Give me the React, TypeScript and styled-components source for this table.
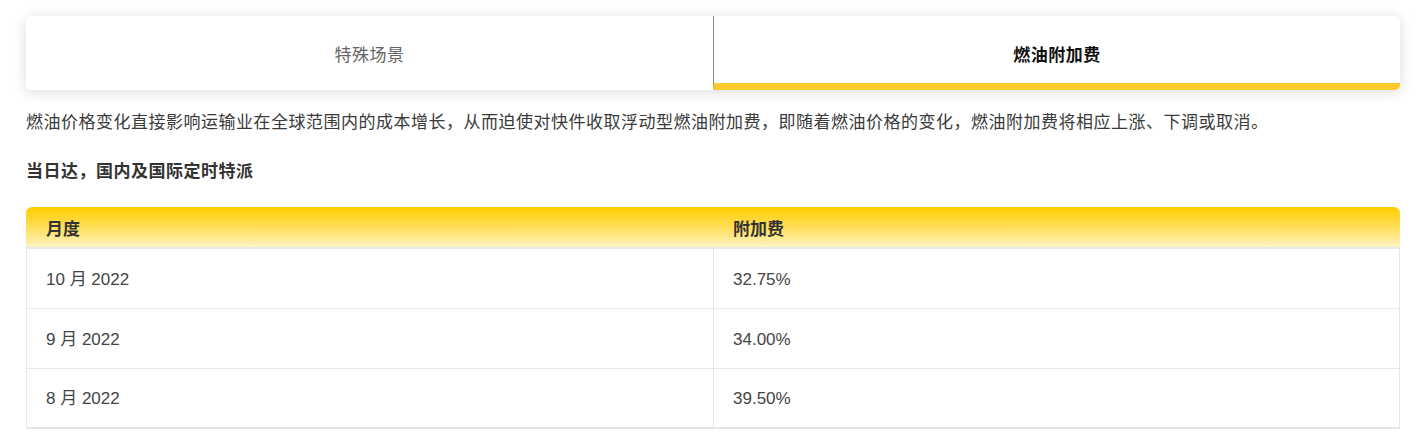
import { Fragment } from "react";
import { createGlobalStyle, styled } from "styled-components";

const GlobalStyle = createGlobalStyle`
  body {
    margin: 0;
    background: #ffffff;
    font-family: "Liberation Sans", Arial, "Noto Sans CJK SC", sans-serif;
    color: #333333;
  }
`;

const Page = styled.div`
  padding: 16px 26px 0;
`;

const Tabs = styled.div`
  display: grid;
  grid-template-columns: 1fr 1fr;
  height: 74px;
  background: #ffffff;
  border-radius: 5px;
  box-shadow: 0 2px 14px rgba(0, 0, 0, 0.14);
  overflow: hidden;
`;

const Tab = styled.div<{ $active?: boolean }>`
  display: flex;
  align-items: center;
  justify-content: center;
  font-size: 17px;
  letter-spacing: 0.5px;
  font-family: "Noto Sans CJK SC", sans-serif;
  color: ${(p) => (p.$active ? "#111111" : "#666666")};
  font-weight: ${(p) => (p.$active ? 700 : 400)};
  border-left: ${(p) => (p.$active ? "1px solid #8a8a8a" : "none")};
  border-bottom: 7px solid ${(p) => (p.$active ? "#fdca2e" : "transparent")};
  padding-top: 7px;
`;

const Intro = styled.p`
  margin: 19px 0 0;
  font-size: 17px;
  letter-spacing: 0.5px;
  line-height: 24px;
  color: #3a3a3a;
  font-family: "Noto Sans CJK SC", sans-serif;
`;

const SubTitle = styled.h4`
  margin: 25px 0 0;
  font-size: 17px;
  letter-spacing: 0.5px;
  line-height: 24px;
  font-weight: 700;
  color: #333333;
  font-family: "Noto Sans CJK SC", sans-serif;
`;

const Table = styled.div`
  margin-top: 25px;
  display: grid;
  grid-template-columns: 1fr 1fr;
`;

const HeadCell = styled.div<{ $last?: boolean }>`
  height: 40px;
  display: flex;
  align-items: center;
  padding-left: 20px;
  font-size: 17px;
  font-weight: 700;
  color: #333333;
  font-family: "Noto Sans CJK SC", sans-serif;
  background: linear-gradient(to bottom, #ffcc00 0%, #ffe060 55%, #fff3c4 100%);
  border-bottom: 2px solid #e8e8e8;
  border-radius: ${(p) => (p.$last ? "0 6px 0 0" : "6px 0 0 0")};
`;

const Cell = styled.div<{ $last?: boolean; $right?: boolean }>`
  height: 60px;
  display: flex;
  align-items: center;
  padding-left: 19px;
  padding-top: 2px;
  font-size: 17px;
  line-height: 20px;
  color: #444444;
  border-bottom: ${(p) => (p.$last ? "2px solid #e6e6e6" : "1px solid #e6e6e6")};
  border-left: 1px solid #e6e6e6;
  border-right: ${(p) => (p.$right ? "1px solid #e6e6e6" : "none")};
  box-sizing: border-box;
`;

const rows = [
  { month: "10 月 2022", fee: "32.75%" },
  { month: "9 月 2022", fee: "34.00%" },
  { month: "8 月 2022", fee: "39.50%" },
];

export default function App() {
  return (
    <Page>
      <GlobalStyle />
      <Tabs>
        <Tab>特殊场景</Tab>
        <Tab $active>燃油附加费</Tab>
      </Tabs>
      <Intro>
        燃油价格变化直接影响运输业在全球范围内的成本增长，从而迫使对快件收取浮动型燃油附加费，即随着燃油价格的变化，燃油附加费将相应上涨、下调或取消。
      </Intro>
      <SubTitle>当日达，国内及国际定时特派</SubTitle>
      <Table>
        <HeadCell>月度</HeadCell>
        <HeadCell $last>附加费</HeadCell>
        {rows.map((r, i) => (
          <Fragment key={r.month}>
            <Cell $last={i === rows.length - 1}>{r.month}</Cell>
            <Cell $last={i === rows.length - 1} $right>
              {r.fee}
            </Cell>
          </Fragment>
        ))}
      </Table>
    </Page>
  );
}
